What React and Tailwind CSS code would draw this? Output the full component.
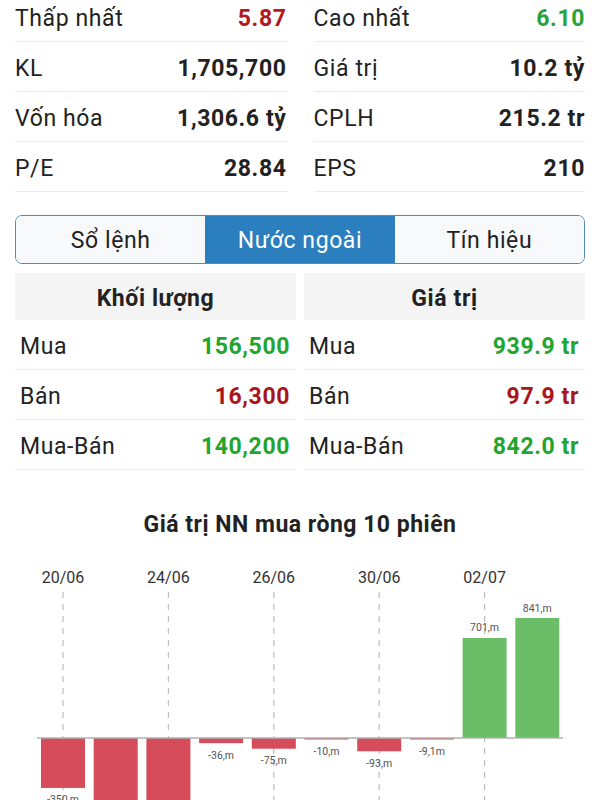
import React from "react";

const topLeft = [
  ["Thấp nhất", "5.87", "text-[#b3191c]"],
  ["KL", "1,705,700", "text-[#222]"],
  ["Vốn hóa", "1,306.6 tỷ", "text-[#222]"],
  ["P/E", "28.84", "text-[#222]"],
];
const topRight = [
  ["Cao nhất", "6.10", "text-[#27a33a]"],
  ["Giá trị", "10.2 tỷ", "text-[#222]"],
  ["CPLH", "215.2 tr", "text-[#222]"],
  ["EPS", "210", "text-[#222]"],
];

const volRows = [
  ["Mua", "156,500", "text-[#22a52e]"],
  ["Bán", "16,300", "text-[#a8161a]"],
  ["Mua-Bán", "140,200", "text-[#22a52e]"],
];
const valRows = [
  ["Mua", "939.9 tr", "text-[#22a52e]"],
  ["Bán", "97.9 tr", "text-[#a8161a]"],
  ["Mua-Bán", "842.0 tr", "text-[#22a52e]"],
];

function StatCol({ rows }) {
  return (
    <div className="flex flex-col">
      {rows.map(([l, v, c]) => (
        <div key={l} className="h-[50px] pt-[5px] flex items-center justify-between border-b border-[#ececec]">
          <span className="text-[23px] tracking-[0.6px] text-[#222]">{l}</span>
          <span className={"text-[23px] tracking-[0.6px] font-bold " + c}>{v}</span>
        </div>
      ))}
    </div>
  );
}

function TableCol({ title, rows }) {
  return (
    <div className="flex flex-col">
      <div className="h-[47px] pt-[6px] bg-[#f4f4f4] flex items-center justify-center text-[23px] tracking-[0.6px] font-bold text-[#222]">
        {title}
      </div>
      {rows.map(([l, v, c]) => (
        <div key={l} className="h-[50px] pt-[5px] flex items-center justify-between pl-[5px] pr-[6px] border-b border-[#ececec]">
          <span className="text-[23px] tracking-[0.6px] text-[#222]">{l}</span>
          <span className={"text-[23px] tracking-[0.6px] font-bold " + c}>{v}</span>
        </div>
      ))}
    </div>
  );
}

const bars = [
  { v: -350, label: "-350,m" },
  { v: -620, label: "" },
  { v: -620, label: "" },
  { v: -36, label: "-36,m" },
  { v: -75, label: "-75,m" },
  { v: -10, label: "-10,m" },
  { v: -93, label: "-93,m" },
  { v: -9.1, label: "-9,1m" },
  { v: 701, label: "701,m" },
  { v: 841, label: "841,m" },
];
const dates = ["20/06", "24/06", "26/06", "30/06", "02/07"];

function Chart() {
  const top = 550;
  const zero = 738 - top;
  const k = 120 / 841;
  return (
    <svg width="600" height="250" viewBox="0 0 600 250" className="block">
      {dates.map((d, i) => {
        const cx = 41 + i * 2 * 52.7 + 22;
        return (
          <g key={d}>
            <text x={cx} y={27 + 6} textAnchor="middle" fontSize="16" fill="#333" fontFamily="Roboto, sans-serif">
              {d}
            </text>
            <line x1={cx} x2={cx} y1={42} y2={250} stroke="#bdbdbd" strokeWidth="1.2" strokeDasharray="6 6" />
          </g>
        );
      })}
      {bars.map((b, i) => {
        const x = 41 + i * 52.7;
        const h = Math.max(Math.abs(b.v) * k, 1.5);
        const y = b.v >= 0 ? zero - h : zero;
        const fill = b.v >= 0 ? "#6bbd68" : "#d74c5a";
        const ly = b.v >= 0 ? y - 10 + 3.5 : y + h + 12 + 3.5;
        return (
          <g key={i}>
            <rect x={x} y={y} width={44} height={h} fill={fill} />
            {b.label && (
              <text x={x + 22} y={ly} textAnchor="middle" fontSize="10.5" fill="#555" fontFamily="Roboto, sans-serif">
                {b.label}
              </text>
            )}
          </g>
        );
      })}
      <line x1={37} x2={563} y1={zero} y2={zero} stroke="#b0b0b0" strokeWidth="1.5" />
    </svg>
  );
}

export default function App() {
  return (
    <div className="w-[600px] h-[800px] overflow-hidden bg-white font-['Roboto',sans-serif]">
      <div className="-mt-[8px] px-[15px] grid grid-cols-2 gap-x-[27px]">
        <StatCol rows={topLeft} />
        <StatCol rows={topRight} />
      </div>
      <div className="mt-[23px] mx-[15px] h-[49px] flex border border-[#5d89ad] rounded-[7px] overflow-hidden">
        <div className="flex-1 pt-[4px] flex items-center justify-center bg-[#f7f9fa] text-[23px] tracking-[0.6px] text-[#222]">Sổ lệnh</div>
        <div className="flex-1 pt-[4px] flex items-center justify-center bg-[#2b7fbe] text-[23px] tracking-[0.6px] text-white">Nước ngoài</div>
        <div className="flex-1 pt-[4px] flex items-center justify-center bg-[#f7f9fa] text-[23px] tracking-[0.6px] text-[#222]">Tín hiệu</div>
      </div>
      <div className="mt-[9px] mx-[15px] grid grid-cols-2 gap-x-[8px]">
        <TableCol title="Khối lượng" rows={volRows} />
        <TableCol title="Giá trị" rows={valRows} />
      </div>
      <div className="mt-[40px] text-center text-[23px] tracking-[0.5px] font-bold text-[#222] leading-[30px]">
        Giá trị NN mua ròng 10 phiên
      </div>
      <div className="mt-[10px]">
        <Chart />
      </div>
    </div>
  );
}
